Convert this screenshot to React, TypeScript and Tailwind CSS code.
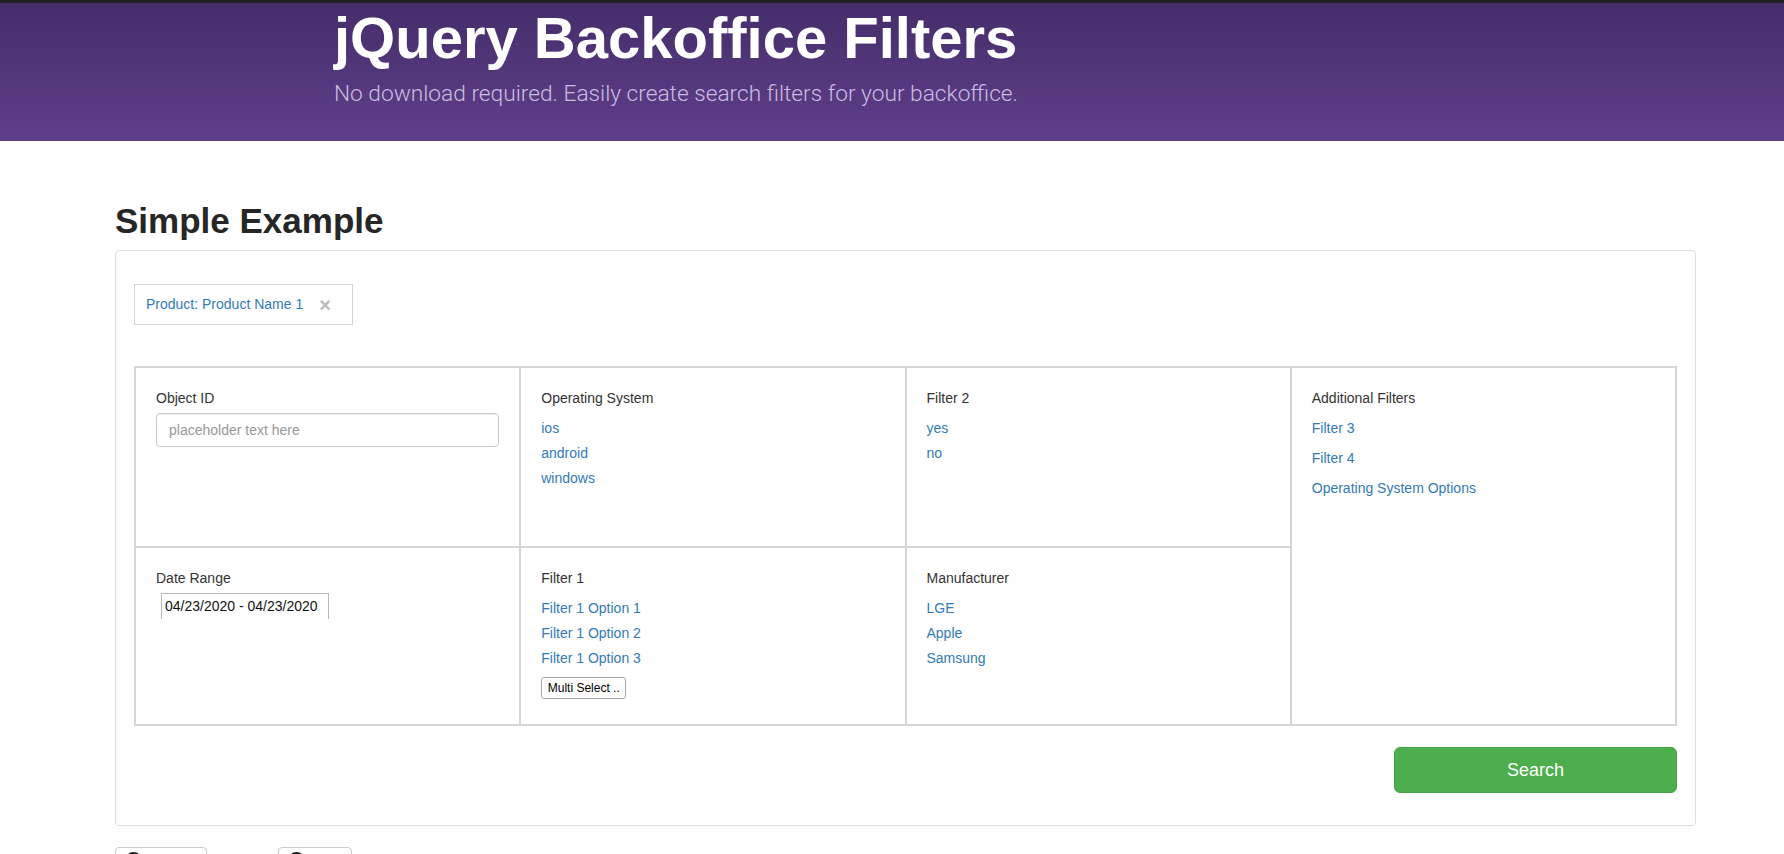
import React from "react";

const linkCls = "block text-[14px] leading-[25px] text-[#337ab7]";
const labelCls = "text-[14px] leading-[20px] text-[#333333]";

function LinkList({ items }: { items: string[] }) {
  return (
    <div className="mt-[8px]">
      {items.map((t) => (
        <a key={t} className={linkCls}>
          {t}
        </a>
      ))}
    </div>
  );
}

export default function App() {
  return (
    <div className="min-h-[854px] bg-white font-['Liberation_Sans',Arial,sans-serif]">
      <header className="h-[141px] border-t-[3px] border-[#242424] bg-[linear-gradient(to_bottom,#452d6a,#5f3f8a)] pl-[334px]">
        <h1 className="pt-[6px] text-[58px] font-bold leading-[57px] text-white">
          jQuery Backoffice Filters
        </h1>
        <p className="mt-[13px] font-['Roboto',sans-serif] text-[22.7px] font-light leading-[30px] text-[#cbbde2]">
          No download required. Easily create search filters for your backoffice.
        </p>
      </header>

      <main className="pl-[115px] pr-[88px]">
        <h2 className="mt-[61px] text-[35px] font-bold leading-[38px] text-[#262626]">
          Simple Example
        </h2>

        <section className="mt-[10px] rounded-[4px] border border-[#dddddd] px-[18px] pb-[32px] pt-[33px]">
          <div className="inline-flex h-[41px] items-center border border-[#d3d3d3] pl-[11px] pr-[21px]">
            <span className="text-[14px] text-[#337ab7]">Product: Product Name 1</span>
            <span className="ml-[16px] text-[20px] font-bold leading-none text-[#bbbbbb]">×</span>
          </div>

          <div className="mt-[41px] grid h-[360px] grid-cols-4 grid-rows-[178px_1fr] gap-[2px] bg-[#d5d5d5] p-[2px]">
            <div className="bg-white px-[20px] pt-[20px]">
              <div className={labelCls}>Object ID</div>
              <input
                className="mt-[5px] h-[34px] w-full rounded-[4px] border border-[#cccccc] px-[12px] text-[14px] text-[#555] shadow-[inset_0_1px_1px_rgba(0,0,0,0.075)] outline-none placeholder:text-[#999999]"
                placeholder="placeholder text here"
              />
            </div>

            <div className="bg-white px-[20px] pt-[20px]">
              <div className={labelCls}>Operating System</div>
              <LinkList items={["ios", "android", "windows"]} />
            </div>

            <div className="bg-white px-[20px] pt-[20px]">
              <div className={labelCls}>Filter 2</div>
              <LinkList items={["yes", "no"]} />
            </div>

            <div className="row-span-2 bg-white px-[20px] pt-[20px]">
              <div className={labelCls}>Additional Filters</div>
              <div className="mt-[5px]">
                {["Filter 3", "Filter 4", "Operating System Options"].map((t) => (
                  <a key={t} className="block text-[14px] leading-[30px] text-[#337ab7]">
                    {t}
                  </a>
                ))}
              </div>
            </div>

            <div className="bg-white px-[20px] pt-[20px]">
              <div className={labelCls}>Date Range</div>
              <div className="ml-[5px] mt-[5px] h-[26px] w-[168px] border-l border-r border-t border-[#b8b8b8] pl-[3px] text-[14px] leading-[25px] text-[#111111]">
                04/23/2020 - 04/23/2020
              </div>
            </div>

            <div className="bg-white px-[20px] pt-[20px]">
              <div className={labelCls}>Filter 1</div>
              <LinkList items={["Filter 1 Option 1", "Filter 1 Option 2", "Filter 1 Option 3"]} />
              <button className="mt-[6px] h-[22px] w-[85px] rounded-[3px] border border-[#a9a9a9] bg-white text-[12px] leading-[20px] text-black">
                Multi Select ..
              </button>
            </div>

            <div className="bg-white px-[20px] pt-[20px]">
              <div className={labelCls}>Manufacturer</div>
              <LinkList items={["LGE", "Apple", "Samsung"]} />
            </div>
          </div>

          <div className="mt-[21px] flex justify-end">
            <button className="h-[46px] w-[283px] rounded-[6px] border border-[#47a447] bg-[#4cae4c] text-[18px] text-white">
              Search
            </button>
          </div>
        </section>

        <div className="mt-[21px] flex gap-[71px]">
          <div className="h-[28px] w-[92px] rounded-[4px] border border-[#cccccc] pl-[9px] pt-[4px]">
            <div className="h-[17px] w-[17px] rounded-full bg-[#222222]" />
          </div>
          <div className="h-[28px] w-[74px] rounded-[4px] border border-[#cccccc] pl-[9px] pt-[4px]">
            <div className="h-[17px] w-[17px] rounded-full bg-[#222222]" />
          </div>
        </div>
      </main>
    </div>
  );
}
